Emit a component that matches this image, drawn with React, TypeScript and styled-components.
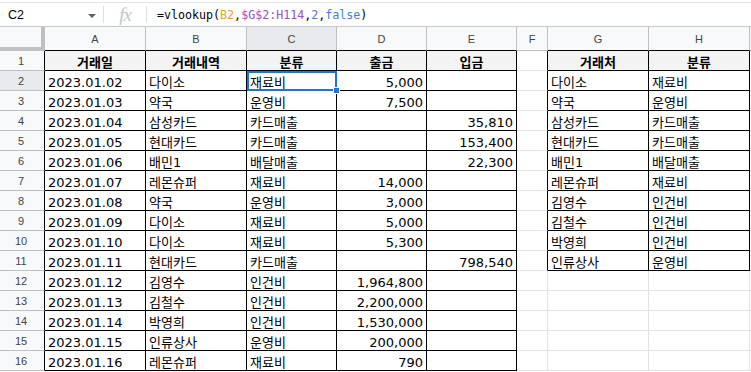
import React from 'react';
import styled, { createGlobalStyle } from 'styled-components';

const GlobalStyle = createGlobalStyle`
  html, body { margin: 0; padding: 0; background: #fff; overflow: hidden; }
  * { box-sizing: border-box; }
`;

const COL_LETTERS = ['A', 'B', 'C', 'D', 'E', 'F', 'G', 'H', ''];
const SELECTED_COL = 2;
const SELECTED_ROW = 2;

const header = ['거래일', '거래내역', '분류', '출금', '입금', '', '거래처', '분류'];
const body: string[][] = [
  ['2023.01.02', '다이소', '재료비', '5,000', '', '', '다이소', '재료비'],
  ['2023.01.03', '약국', '운영비', '7,500', '', '', '약국', '운영비'],
  ['2023.01.04', '삼성카드', '카드매출', '', '35,810', '', '삼성카드', '카드매출'],
  ['2023.01.05', '현대카드', '카드매출', '', '153,400', '', '현대카드', '카드매출'],
  ['2023.01.06', '배민1', '배달매출', '', '22,300', '', '배민1', '배달매출'],
  ['2023.01.07', '레몬슈퍼', '재료비', '14,000', '', '', '레몬슈퍼', '재료비'],
  ['2023.01.08', '약국', '운영비', '3,000', '', '', '김영수', '인건비'],
  ['2023.01.09', '다이소', '재료비', '5,000', '', '', '김철수', '인건비'],
  ['2023.01.10', '다이소', '재료비', '5,300', '', '', '박영희', '인건비'],
  ['2023.01.11', '현대카드', '카드매출', '', '798,540', '', '인류상사', '운영비'],
  ['2023.01.12', '김영수', '인건비', '1,964,800', '', '', '', ''],
  ['2023.01.13', '김철수', '인건비', '2,200,000', '', '', '', ''],
  ['2023.01.14', '박영희', '인건비', '1,530,000', '', '', '', ''],
  ['2023.01.15', '인류상사', '운영비', '200,000', '', '', '', ''],
  ['2023.01.16', '레몬슈퍼', '재료비', '790', '', '', '', ''],
];

const isDark = (r: number, c: number) =>
  (c >= 0 && c <= 4 && r >= 1 && r <= 16) || ((c === 6 || c === 7) && r >= 1 && r <= 11);

const FormulaBar = styled.div`
  margin-top: 2px;
  height: 25px;
  border-top: 1px solid #e3e3e3;
  border-bottom: 1px solid #c7c7c7;
  display: flex;
  align-items: center;
  background: #fff;
`;

const NameBox = styled.div`
  width: 103px;
  height: 100%;
  display: flex;
  align-items: center;
  justify-content: space-between;
  padding: 0 7px 0 8px;
  font: 12.5px "Liberation Sans", Arial, sans-serif;
  color: #000;
`;

const Caret = styled.span`
  width: 0;
  height: 0;
  border-left: 4px solid transparent;
  border-right: 4px solid transparent;
  border-top: 4px solid #5f6368;
  margin-top: 2px;
`;

const Divider = styled.div`
  width: 1px;
  height: 17px;
  background: #e0e0e0;
`;

const FxBox = styled.div`
  width: 42px;
  display: flex;
  justify-content: center;
  align-items: center;
  font: italic 19px "Liberation Serif", serif;
  color: #c4c4c4;
  letter-spacing: -1px;
`;

const FormulaText = styled.div`
  padding-left: 10px;
  font: 11.65px/16px "DejaVu Sans Mono", monospace;
  color: #000;
  white-space: pre;
`;

const Token = styled.span<{ $color: string }>`
  color: ${(p) => p.$color};
`;

const Sheet = styled.div`
  display: grid;
  grid-template-columns: 45px 101px 101px 90px 90px 90px 31px 101px 101px 1fr;
  grid-template-rows: 24px;
  grid-auto-rows: 20px;
`;

const Corner = styled.div`
  background: #f8f9fa;
  border-right: 4px solid #c0c0c0;
  border-bottom: 4px solid #c0c0c0;
`;

const ColHeader = styled.div<{ $selected: boolean; $darkBottom: boolean }>`
  background: ${(p) => (p.$selected ? '#e8eaed' : '#f8f9fa')};
  border-right: 1px solid #c0c0c0;
  border-bottom: 1px solid ${(p) => (p.$darkBottom ? '#000' : '#c0c0c0')};
  display: flex;
  align-items: center;
  justify-content: center;
  font: 11px "Liberation Sans", Arial, sans-serif;
  color: #444;
  padding-top: 1px;
`;

const RowHeader = styled.div<{ $selected: boolean; $darkRight: boolean }>`
  background: ${(p) => (p.$selected ? '#e8eaed' : '#f8f9fa')};
  border-right: 1px solid ${(p) => (p.$darkRight ? '#000' : '#c0c0c0')};
  border-bottom: 1px solid #c0c0c0;
  display: flex;
  align-items: center;
  justify-content: center;
  padding-right: 2px;
  font: 11px "Liberation Sans", Arial, sans-serif;
  color: #444;
`;

const Cell = styled.div<{
  $darkRight: boolean;
  $darkBottom: boolean;
  $head: boolean;
  $align: 'left' | 'right' | 'center';
}>`
  position: relative;
  display: flex;
  align-items: flex-end;
  justify-content: ${(p) =>
    p.$align === 'right' ? 'flex-end' : p.$align === 'center' ? 'center' : 'flex-start'};
  padding: 0 3px 0 3px;
  background: ${(p) => (p.$head ? '#f3f3f3' : '#fff')};
  border-right: 1px solid ${(p) => (p.$darkRight ? '#000' : '#e2e2e2')};
  border-bottom: 1px solid ${(p) => (p.$darkBottom ? '#000' : '#e2e2e2')};
  font: ${(p) => (p.$head ? 'bold ' : '')}13px/15px "DejaVu Sans", "Noto Sans CJK KR", sans-serif;
  color: #000;
  white-space: nowrap;
`;

const Selection = styled.div`
  position: absolute;
  left: 0;
  top: 0;
  right: -1px;
  bottom: -1px;
  border: 2px solid #1a73e8;
  pointer-events: none;
  z-index: 2;
`;

const Handle = styled.div`
  position: absolute;
  right: -5px;
  bottom: -5px;
  width: 7px;
  height: 7px;
  background: #1a73e8;
  border: 1px solid #fff;
`;

export default function App() {
  const rows = [header, ...body];
  return (
    <>
      <GlobalStyle />
      <FormulaBar>
        <NameBox>
          <span>C2</span>
          <Caret />
        </NameBox>
        <Divider />
        <FxBox>fx</FxBox>
        <Divider />
        <FormulaText>
          =vlookup(<Token $color="#f29b1d">B2</Token>,
          <Token $color="#9c4fc0">$G$2:H114</Token>,<Token $color="#5a6fd8">2</Token>,
          <Token $color="#3f7ee0">false</Token>)
        </FormulaText>
      </FormulaBar>
      <Sheet>
        <Corner />
        {COL_LETTERS.map((l, c) => (
          <ColHeader key={'h' + c} $selected={c === SELECTED_COL} $darkBottom={isDark(1, c)}>
            {l}
          </ColHeader>
        ))}
        {rows.map((row, ri) => {
          const r = ri + 1;
          return (
            <React.Fragment key={'r' + r}>
              <RowHeader $selected={r === SELECTED_ROW} $darkRight={isDark(r, 0)}>
                {r}
              </RowHeader>
              {[...row, ''].map((v, c) => {
                const align: 'left' | 'right' | 'center' =
                  r === 1 ? 'center' : c === 3 || c === 4 ? 'right' : 'left';
                const sel = r === SELECTED_ROW && c === SELECTED_COL;
                return (
                  <Cell
                    key={c}
                    $darkRight={isDark(r, c) || isDark(r, c + 1)}
                    $darkBottom={isDark(r, c) || isDark(r + 1, c)}
                    $head={r === 1 && isDark(r, c)}
                    $align={align}
                  >
                    {v}
                    {sel && (
                      <Selection>
                        <Handle />
                      </Selection>
                    )}
                  </Cell>
                );
              })}
            </React.Fragment>
          );
        })}
      </Sheet>
    </>
  );
}
